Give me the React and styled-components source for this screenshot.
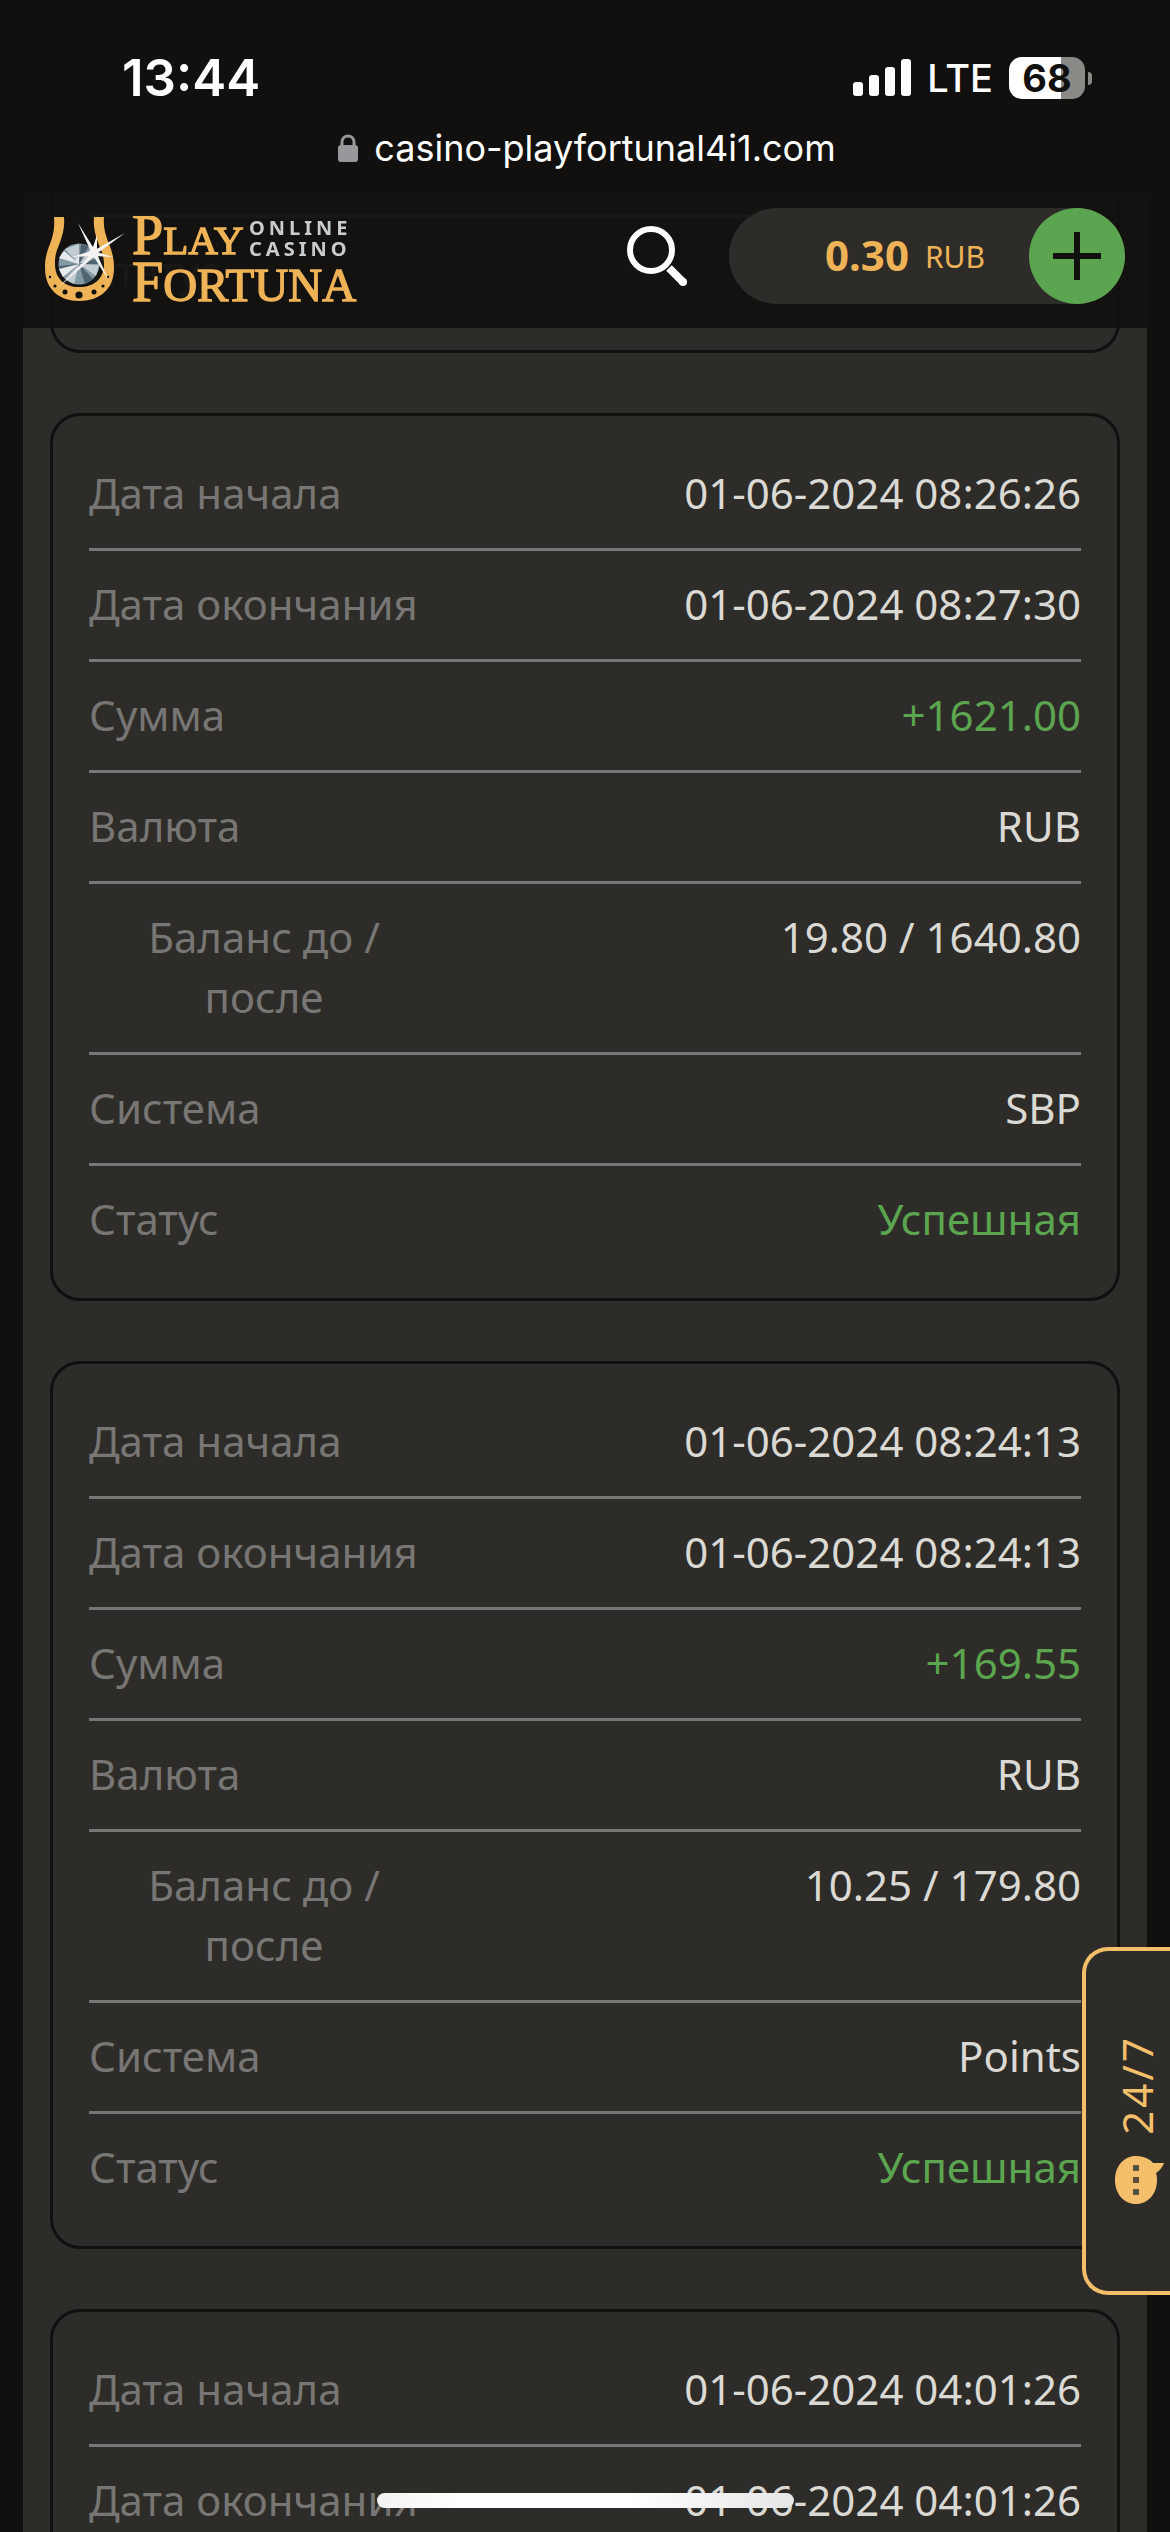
import React from "react";
import styled, { createGlobalStyle } from "styled-components";

const records = [
  {
    id: 1,
    rows: [
      { label: "Дата начала", value: "01-06-2024 08:26:26" },
      { label: "Дата окончания", value: "01-06-2024 08:27:30" },
      { label: "Сумма", value: "+1621.00", success: true },
      { label: "Валюта", value: "RUB" },
      { label: "Баланс до / после", value: "19.80 / 1640.80" },
      { label: "Система", value: "SBP" },
      { label: "Статус", value: "Успешная", success: true },
    ],
  },
  {
    id: 2,
    rows: [
      { label: "Дата начала", value: "01-06-2024 08:24:13" },
      { label: "Дата окончания", value: "01-06-2024 08:24:13" },
      { label: "Сумма", value: "+169.55", success: true },
      { label: "Валюта", value: "RUB" },
      { label: "Баланс до / после", value: "10.25 / 179.80" },
      { label: "Система", value: "Points" },
      { label: "Статус", value: "Успешная", success: true },
    ],
  },
  {
    id: 3,
    rows: [
      { label: "Дата начала", value: "01-06-2024 04:01:26" },
      { label: "Дата окончания", value: "01-06-2024 04:01:26" },
    ],
  },
];

const Logo = () => (
  <svg width="316" height="88" viewBox="0 0 316 88" role="img" aria-label="Play Fortuna">
    <path
      d="M9 1H19C20 12 17 21 14 29C10 38 10 43 10 48C10 63 20 71 34 71C49 71 59 63 59 48C59 43 58 38 54 29C51 21 48 12 49 1H59C58 12 61 20 64 28C68 38 69 44 69 52C69 74 54 85 34 85C15 85 0 74 0 52C0 44 1 38 5 28C8 20 10 12 9 1Z"
      fill="#efb357"
    />
    <g fill="#11100e">
      <circle cx="34" cy="79" r="3.6" />
      <circle cx="20" cy="76" r="2.5" />
      <circle cx="49" cy="76" r="2.5" />
      <circle cx="10" cy="70" r="1.6" />
      <circle cx="58" cy="70" r="1.6" />
      <circle cx="5" cy="61" r="1.2" />
      <circle cx="63" cy="61" r="1.2" />
    </g>
    <circle cx="34" cy="48" r="20.5" fill="#8399a5" />
    <path d="M34 48L20 33L34 28ZM34 48L47 31L53 40ZM34 48L54 49L51 60ZM34 48L29 68L20 63Z" fill="#c3ccd2" />
    <path d="M34 48L14 50L16 58ZM34 48L40 68L48 63ZM34 48L36 28L44 30ZM34 48L54 42L54 48Z" fill="#4e6571" />
    <path d="M34 48L14 42L19 35ZM34 48L18 61L14 53ZM34 48L30 46L34 40Z" fill="#e7ebee" />
    <g fill="#f4f4f2">
      <path d="M33 7L51 36L47 38Z" />
      <path d="M80 17L50 39L48 35Z" />
      <path d="M14 71L48 36L51 39Z" />
      <path d="M64 65L47 38L51 36Z" />
      <path d="M52 19L52 37L46 37Z" />
      <path d="M27 41L49 34L49 40Z" />
      <path d="M68 41L49 40L49 35Z" />
      <circle cx="49" cy="37" r="4" />
    </g>
    <g fill="#efb357" stroke="#efb357" strokeWidth="1.4" fontFamily="Liberation Serif, serif">
      <text x="87" y="38" fontSize="56">
        P<tspan fontSize="41">LAY</tspan>
      </text>
      <text x="87" y="85" fontSize="56">
        F<tspan fontSize="47">ORTUNA</tspan>
      </text>
    </g>
    <g fill="#c9cccf" fontFamily="Noto Sans, sans-serif" fontSize="20" fontWeight="700" letterSpacing="4">
      <text x="204" y="19">ONLINE</text>
      <text x="204" y="40">CASINO</text>
    </g>
  </svg>
);

const SearchIcon = () => (
  <svg width="60" height="60" viewBox="0 0 60 60" fill="none" stroke="#fff">
    <circle cx="24" cy="24" r="21" strokeWidth="6" />
    <path d="M42 42L56 56" strokeWidth="8" />
    <circle cx="56" cy="56" r="4" fill="#fff" stroke="none" />
  </svg>
);

const PlusIcon = () => (
  <svg width="48" height="48" viewBox="0 0 48 48" stroke="#11100e" strokeWidth="6">
    <path d="M24 0V48M0 24H48" />
  </svg>
);

const SignalIcon = () => (
  <svg width="58" height="38" viewBox="0 0 58 38" fill="#fff">
    <rect x="0" y="23" width="10" height="14" rx="3" />
    <rect x="16" y="16" width="10" height="21" rx="3" />
    <rect x="32" y="8" width="10" height="29" rx="3" />
    <rect x="48" y="0" width="10" height="37" rx="3" />
  </svg>
);

const LockIcon = () => (
  <svg width="20" height="28" viewBox="0 0 20 28">
    <path d="M4 13V8C4 0 16 0 16 8V13" fill="none" stroke="#98979c" strokeWidth="3" />
    <rect x="0" y="11" width="20" height="17" rx="3" fill="#98979c" />
  </svg>
);

const ChatIcon = () => (
  <svg width="50" height="50" viewBox="0 0 50 50">
    <path d="M22 1C31 1 37 5 39 8H50C49 12 44 17 42 18C43 21 43 23 43 25C43 39 34 49 22 49C10 49 1 39 1 25C1 11 10 1 22 1Z" fill="#f3bf6b" />
    <g fill="#5d5039">
      <rect x="19" y="10" width="6" height="6" />
      <rect x="19" y="22" width="6" height="6" />
      <rect x="19" y="34" width="6" height="6" />
    </g>
  </svg>
);

const Record = ({ rows, tail }) => (
  <Card $tail={tail}>
    {rows.map((row) => (
      <Row key={row.label}>
        <Label>{row.label}</Label>
        <Value $success={row.success}>{row.value}</Value>
      </Row>
    ))}
  </Card>
);

const App = () => {
  return (
    <Page>
      <GlobalStyle />
      <StatusBar>
        <Time>13:44</Time>
        <Indicators>
          <SignalIcon />
          <Network>LTE</Network>
          <Battery>
            <BatteryBody>68</BatteryBody>
            <BatteryTip />
          </Battery>
        </Indicators>
      </StatusBar>
      <AddressBar>
        <LockIcon />
        <span>casino-playfortunal4i1.com</span>
      </AddressBar>
      <Content>
        <Header>
          <LogoLink href="#">
            <Logo />
          </LogoLink>
          <SearchButton aria-label="Поиск">
            <SearchIcon />
          </SearchButton>
          <Balance>
            <Amount>0.30</Amount>
            <Currency>RUB</Currency>
            <AddButton aria-label="Пополнить">
              <PlusIcon />
            </AddButton>
          </Balance>
        </Header>
        <Records>
          <Record tail rows={[{ label: "Статус", value: "Успешная", success: true }]} />
          {records.map((record) => (
            <Record key={record.id} rows={record.rows} />
          ))}
        </Records>
      </Content>
      <ChatTab>
        <ChatIcon />
        <ChatText>24/7</ChatText>
      </ChatTab>
      <HomeIndicator />
    </Page>
  );
};

//Styled Components
const GlobalStyle = createGlobalStyle`
  * {
    box-sizing: border-box;
  }
  body {
    margin: 0;
    background: #11100e;
    font-family: "Noto Sans", sans-serif;
  }
  button {
    border: 0;
    padding: 0;
    background: none;
    font: inherit;
    cursor: pointer;
  }
  svg {
    display: block;
    flex-shrink: 0;
  }
`;

const Page = styled.div`
  height: 100vh;
  overflow: hidden;
  display: flex;
  flex-direction: column;
  background: #11100e;
`;

const StatusBar = styled.div`
  flex-shrink: 0;
  display: flex;
  align-items: center;
  justify-content: space-between;
  height: 120px;
  padding: 36px 78px 0 122px;
  color: #fff;
  font-family: Inter, sans-serif;
`;

const Time = styled.div`
  font-size: 51px;
  font-weight: 600;
  line-height: 60px;
`;

const Indicators = styled.div`
  display: flex;
  align-items: center;
  gap: 16px;
`;

const Network = styled.span`
  font-size: 38px;
  font-weight: 500;
  line-height: 48px;
`;

const Battery = styled.div`
  display: flex;
  align-items: center;
  gap: 3px;
`;

const BatteryBody = styled.div`
  width: 76px;
  height: 42px;
  border-radius: 13px;
  background: linear-gradient(to right, #fff 68%, #8a8986 68%);
  color: #11100e;
  font-size: 38px;
  font-weight: 700;
  line-height: 42px;
  text-align: center;
`;

const BatteryTip = styled.div`
  width: 4px;
  height: 13px;
  border-radius: 0 4px 4px 0;
  background: #8a8986;
`;

const AddressBar = styled.div`
  flex-shrink: 0;
  display: flex;
  align-items: center;
  justify-content: center;
  gap: 16px;
  height: 73px;
  padding: 0 0 18px 4px;
  color: #fff;
  font-family: Inter, sans-serif;
  font-size: 36px;
  line-height: 48px;
`;

const Content = styled.main`
  flex: 1;
  min-height: 0;
  margin: 0 23px;
  background: #2e2c28;
`;

const Header = styled.header`
  position: sticky;
  top: 0;
  z-index: 1;
  display: flex;
  align-items: center;
  height: 135px;
  margin-bottom: -135px;
  padding: 0 22px 9px;
  background: rgba(17, 16, 14, 0.92);
`;

const LogoLink = styled.a`
  margin: 8px auto 0 0;
`;

const SearchButton = styled.button`
  margin-right: 42px;
`;

const Balance = styled.div`
  display: flex;
  align-items: center;
  justify-content: flex-end;
  width: 396px;
  height: 96px;
  border-radius: 48px;
  background: #2e2c28;
  color: #efb357;
`;

const Amount = styled.span`
  margin-right: 16px;
  font-size: 42px;
  font-weight: 700;
  line-height: 60px;
  padding-bottom: 2px;
`;

const Currency = styled.span`
  margin-right: 44px;
  font-size: 30px;
`;

const AddButton = styled.button`
  display: flex;
  align-items: center;
  justify-content: center;
  width: 96px;
  height: 96px;
  border-radius: 50%;
  background: #5ca550;
`;

const Records = styled.div`
  display: flex;
  flex-direction: column;
  gap: 60px;
  padding: 0 27px;
`;

const Row = styled.div`
  display: flex;
  justify-content: space-between;
  padding: 23px 0 25px;
  border-bottom: 3px solid #777674;

  &:last-child {
    border-bottom: 0;
  }
`;

const Card = styled.dl`
  margin: 0;
  padding: 24px 36px;
  border: 3px solid #11100e;
  border-radius: 30px;

  ${({ $tail }) =>
    $tail &&
    `
    padding-top: 22px;
    border-top: 0;
    border-radius: 0 0 30px 30px;

    ${Row} {
      border-top: 3px solid #777674;
    }
  `}
`;

const Label = styled.dt`
  max-width: 350px;
  color: #777674;
  font-size: 42px;
  line-height: 60px;
  text-align: center;
`;

const Value = styled.dd`
  margin: 0;
  color: ${({ $success }) => ($success ? "#5ca550" : "#dad9d4")};
  font-size: 42px;
  line-height: 60px;
  text-align: right;
`;

const ChatTab = styled.button`
  position: fixed;
  top: 1947px;
  right: 0;
  z-index: 2;
  display: flex;
  flex-direction: column-reverse;
  align-items: center;
  gap: 20px;
  width: 88px;
  height: 348px;
  padding: 0 0 86px 22px;
  border: 4px solid #f3bf6b;
  border-right: 0;
  border-radius: 26px 0 0 26px;
  background: #2e2c28;
`;

const ChatText = styled.span`
  padding-left: 4px;
  color: #f3bf6b;
  font-size: 42px;
  line-height: 48px;
  letter-spacing: 3px;
  writing-mode: vertical-rl;
  transform: rotate(180deg);
`;

const HomeIndicator = styled.div`
  position: fixed;
  bottom: 24px;
  left: 50%;
  z-index: 2;
  width: 417px;
  height: 15px;
  margin-left: -208px;
  border-radius: 8px;
  background: linear-gradient(to right, #f2f2f2, #fff 20%, #fff 60%, #e6e6e6);
`;

export default App;
